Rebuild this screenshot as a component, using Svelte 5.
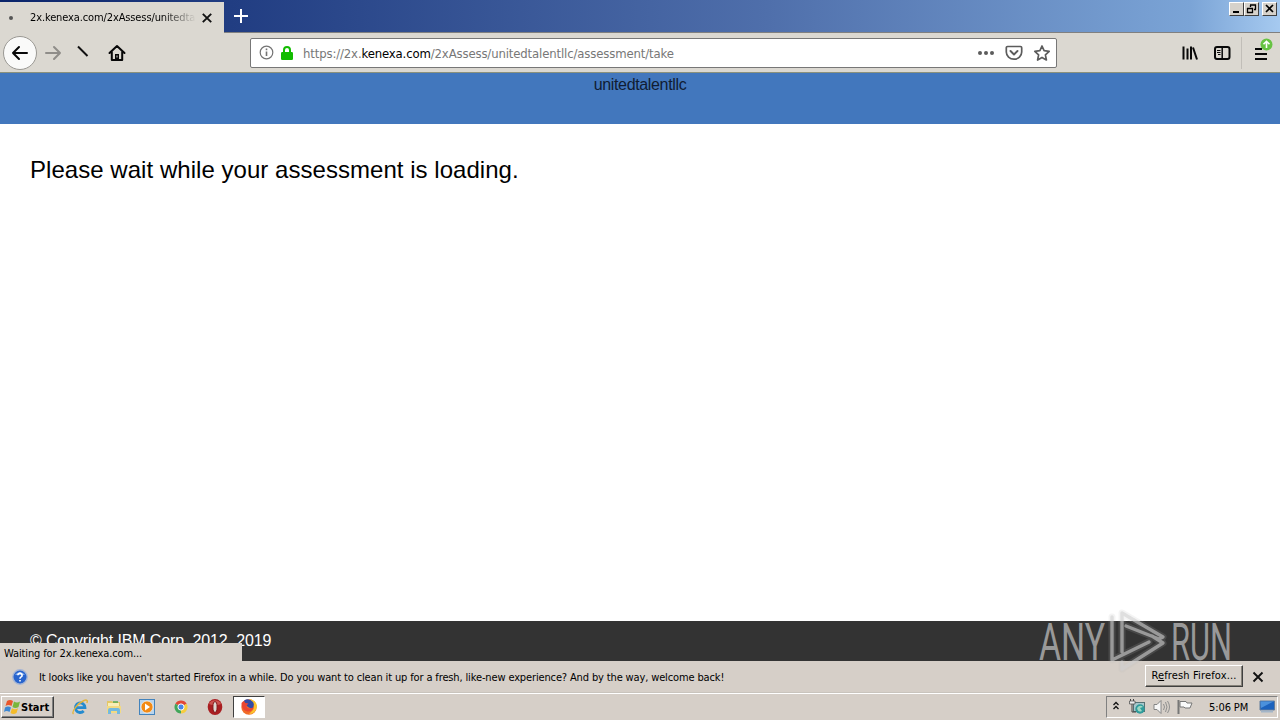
<script>
  const host = '2x.kenexa.com';
  const message =
    "It looks like you haven't started Firefox in a while. Do you want to clean it up for a fresh, like-new experience? And by the way, welcome back!";
</script>

<div class="screen">
  <div class="titlebar">
    <div class="tab">
      <span class="dot"></span>
      <span class="tabtitle">2x.kenexa.com/2xAssess/unitedta</span>
      <svg class="tabclose" width="12" height="12" viewBox="0 0 12 12"><path d="M1.8 1.8l8.4 8.4M10.2 1.8l-8.4 8.4" stroke="#111" stroke-width="1.9" /></svg>
    </div>
    <svg class="plus" width="16" height="16" viewBox="0 0 16 16"><path d="M8 1v14M1 8h14" stroke="#fff" stroke-width="2" /></svg>
    <div class="winbtns">
      <span class="wb"><svg width="14" height="12"><path d="M3 9h6" stroke="#000" stroke-width="2" /></svg></span>
      <span class="wb"><svg width="14" height="12"><path d="M5 2h6M10.500 1.500v5M5.500 2v2M9 6.500h2M2 5.500h6M2.500 5v5M7.500 5v5M2 9.500h6" stroke="#000" stroke-width="1.300" fill="none" /></svg></span>
      <span class="wb last"><svg width="14" height="12"><path d="M3 2l7 7M10 2l-7 7" stroke="#000" stroke-width="1.700" /></svg></span>
    </div>
  </div>

  <div class="toolbar">
    <div class="back"><svg width="18" height="16" viewBox="0 0 18 16"><path d="M8 2L2 8l6 6M2 8h14" fill="none" stroke="#080808" stroke-width="2" stroke-linecap="round" stroke-linejoin="round" /></svg></div>
    <svg class="fwd" width="18" height="16" viewBox="0 0 18 16"><path d="M10 2l6 6-6 6M16 8H2" fill="none" stroke="#8f8d89" stroke-width="2" stroke-linecap="round" stroke-linejoin="round" /></svg>
    <svg class="slash" width="14" height="14" viewBox="0 0 14 14"><path d="M2 1.500l9.500 9.500" stroke="#111" stroke-width="2" /></svg>
    <svg class="home" width="18" height="18" viewBox="0 0 18 18"><path d="M1.500 9L9 2l7.500 7M3.800 8v8h10.400V8" fill="none" stroke="#080808" stroke-width="2" stroke-linejoin="round" stroke-linecap="round" /><path d="M7 16v-6h4v6z" fill="#080808" /><path d="M9 11.500v2" stroke="#dbd8d1" stroke-width="1" /></svg>
    <div class="urlbar">
      <svg class="info" width="15" height="15" viewBox="0 0 15 15"><circle cx="7.500" cy="7.500" r="6.300" fill="none" stroke="#737373" stroke-width="1.200" /><path d="M7.500 6.500v4.500M7.500 3.500v1.700" stroke="#737373" stroke-width="1.600" /></svg>
      <svg class="lock" width="12" height="14" viewBox="0 0 12 14"><path d="M3 7V4a3 3 0 0 1 6 0v3" fill="none" stroke="#12bc00" stroke-width="2" /><rect y="6" width="12" height="8" rx="1.200" fill="#12bc00" /></svg>
      <span class="url">https://2x.<b>kenexa.com</b>/2xAssess/unitedtalentllc/assessment/take</span>
      <svg class="urlicons" width="76" height="18" viewBox="0 0 76 18">
        <g fill="#5c5c5c"><circle cx="4" cy="9" r="2" /><circle cx="10" cy="9" r="2" /><circle cx="16" cy="9" r="2" /></g>
        <g fill="none" stroke="#5c5c5c" stroke-width="1.900" stroke-linejoin="round" stroke-linecap="round"><path d="M31.500 2.500h13a1.200 1.200 0 0 1 1.200 1.200V8a7.700 7.200 0 0 1-15.400 0V3.700a1.200 1.200 0 0 1 1.200-1.200z" stroke-width="1.700" /><path d="M34.500 7l3.500 3.500L41.500 7" /><path d="M66 2l2.100 4.700 5.100.6-3.800 3.500 1 5.200L66 13.400 61.600 16l1-5.200-3.800-3.500 5.100-.6z" stroke-width="1.700" /></g>
      </svg>
    </div>
    <svg class="library" width="16" height="16" viewBox="0 0 16 16"><path d="M1.500 1.500v13M5.500 3.500v11M9 1.500v13M11 2.500l4 12" fill="none" stroke="#080808" stroke-width="2" /></svg>
    <svg class="sidebar" width="17" height="14" viewBox="0 0 17 14"><rect x="1" y="1" width="14.500" height="12" rx="2" fill="none" stroke="#080808" stroke-width="2" /><path d="M8.200 1v12" stroke="#080808" stroke-width="1.500" /><path d="M3 4.500h3.500M3 6.500h3.500M4 8.500h2.500" stroke="#080808" stroke-width="1" /></svg>
    <div class="menu"><svg width="26" height="28" viewBox="0 0 26 28"><path d="M7 12h7M7 17h12M7 22h12" stroke="#080808" stroke-width="2" /><circle cx="18.500" cy="7.500" r="6" fill="#67c343" /><path d="M18.500 11V4.500M15.500 7.300l3-3 3 3" fill="none" stroke="#fff" stroke-width="1.600" /></svg></div>
  </div>

  <header>unitedtalentllc</header>
  <main><p>Please wait while your assessment is loading.</p></main>
  <footer>
    <span class="copy">© Copyright IBM Corp. 2012, 2019</span>
    <div class="status"><span>Waiting for {host}...</span></div>
    <div class="mark">
      <svg width="200" height="68" viewBox="0 0 200 68">
        <g fill="#999" font-family="Roboto, sans-serif" font-size="51">
          <text x="1" y="51" textLength="66" lengthAdjust="spacingAndGlyphs">ANY</text>
          <text x="133" y="51" textLength="61" lengthAdjust="spacingAndGlyphs">RUN</text>
        </g>
        <g fill="none" stroke-linejoin="round" stroke-linecap="round">
          <path d="M84 43V4L125 28L121 30L88 17M74 8V51L111 33M84 60L125 34L114 27M84 60V53" stroke="#bbb" stroke-opacity=".16" stroke-width="7" />
          <path d="M84 43V4L125 28L121 30L88 17M74 8V51L111 33M84 60L125 34L114 27M84 60V53" stroke="#d0d0d0" stroke-opacity=".6" stroke-width="3.400" />
        </g>
      </svg>
    </div>
  </footer>

  <div class="notice">
    <svg class="help" width="16" height="16" viewBox="0 0 16 16"><circle cx="8" cy="8" r="7.200" fill="#2864cd" stroke="#a6b6d5" stroke-width="1.400" /><path d="M3 6a5.500 4.500 0 0 1 10 0z" fill="#7da9ee" /><path d="M5.900 6.200a2.100 2 0 1 1 3.200 1.700Q8 8.500 8 9.700M8 11v1.600" fill="none" stroke="#fff" stroke-width="1.600" /></svg>
    <span class="msg">{message}</span>
    <button><span>R<u>e</u>fresh Firefox...</span></button>
    <svg class="nclose" width="12" height="12" viewBox="0 0 12 12"><path d="M1.500 1.500l9 9M10.500 1.500l-9 9" stroke="#111" stroke-width="1.900" /></svg>
  </div>

  <div class="taskbar">
    <div class="start">
      <svg width="17" height="16" viewBox="0 0 17 16"><path d="M3 2q3-2 6 0L7.500 7q-3-2-6 0z" fill="#e9562b" /><path d="M10 2.500q3 2 6 0L14.500 8q-3 2-6 0z" fill="#79b63b" /><path d="M1 8.500q3-2 6 0L5.500 13q-3-2-5.500 0z" fill="#3c87d3" /><path d="M8 9.200q3 2 6 0L12.500 14q-3 2-6 0z" fill="#f5bc2a" /></svg>
      <span>Start</span>
    </div>
    <div class="apps">
      <svg width="18" height="18" viewBox="0 0 18 18"><path d="M4.800 9.700h9.200A4.800 4.800 0 1 0 12.700 13" fill="none" stroke="#258bcf" stroke-width="2.800" /><path d="M2.500 16C0 14 7 5 13 2.500c3-1.200 4 .2 2.800 2.500" fill="none" stroke="#e2b43b" stroke-width="1.400" /></svg>
      <svg width="18" height="18" viewBox="0 0 18 18"><path d="M2 3h5l1 1h7v11H2z" fill="#e4c767" /><path d="M3 5h11v6H3z" fill="#f9eeb6" /><path d="M2 8h14v7H2z" fill="#f3da82" /><path d="M3 16v-4q0-2 2-2h8q2 0 2 2v4h-3v-3H6v3z" fill="#74b9df" /><path d="M8 4h5" stroke="#57a950" stroke-width="1.500" /></svg>
      <svg width="18" height="18" viewBox="0 0 18 18"><rect x="1.500" y="1.500" width="15" height="15" fill="#b8d4ed" stroke="#4383bc" /><circle cx="9" cy="9" r="6" fill="#f28a16" stroke="#fff" stroke-width=".6" /><path d="M7 5.500l5 3.500-5 3.500z" fill="#fff" /></svg>
      <svg width="18" height="18" viewBox="0 0 18 18"><path d="M9 9L3.370 5.750A6.500 6.500 0 0 1 14.630 5.750z" fill="#e24736" /><path d="M9 9l5.630-3.250A6.500 6.500 0 0 1 9 15.500z" fill="#f6cd3e" /><path d="M9 9v6.500A6.500 6.500 0 0 1 3.370 5.750z" fill="#42a65a" /><circle cx="9" cy="9" r="3.100" fill="#4886e8" stroke="#fff" stroke-width="1" /></svg>
      <svg width="18" height="18" viewBox="0 0 18 18"><ellipse cx="9" cy="9" rx="7.300" ry="8" fill="#a91e21" /><path d="M3 6a6.500 6 0 0 1 12 0L9 8z" fill="#cc5350" /><ellipse cx="9" cy="9" rx="2.100" ry="5.400" fill="#ddd6d0" stroke="#811316" /></svg>
      <div class="active"><svg width="18" height="18" viewBox="0 0 18 18"><circle cx="9" cy="9" r="7.700" fill="#f16b28" /><path d="M9 1q7 1 8 7-1 8-8 8l4-4q3-5-4-11z" fill="#fbc42d" /><path d="M4 2.500Q9-.5 13 4q2 3-1 7L8 9 5 6z" fill="#324ba5" /><path d="M1.500 5l2-2 2 2 3 .5-2 2q0 3 3 3l4-1q-1 4-6 4-6-1-6-8.500z" fill="#e94532" /></svg></div>
    </div>
    <div class="tray">
      <svg class="chev" width="8" height="12" viewBox="0 0 8 12"><path d="M1.500 5L4 2.500 6.500 5M1.500 9L4 6.500 6.500 9" fill="none" stroke="#111" stroke-width="1.300" /></svg>
      <svg class="net" width="17" height="16" viewBox="0 0 17 16"><rect x="4.500" y="3.500" width="11" height="9" fill="#a6c8cc" stroke="#557174" /><path d="M1.500 0v4M4.500 0v4M3 5v8h4" fill="none" stroke="#444" /><path d="M.5 2h5.500v3H.5z" fill="#eee" stroke="#555" stroke-width=".8" /><circle cx="11" cy="10" r="4.700" fill="#2f9b9b" /><path d="M8 9q3-4 6-1l-3 1 2 3q-4 2-5-3z" fill="#a0d8c3" /></svg>
      <svg class="vol" width="17" height="16" viewBox="0 0 17 16"><path d="M1 5.500h3L8 1.500v13l-4-4H1z" fill="#f7f7f7" stroke="#858585" /><path d="M10.500 5q2 3 0 6M12.500 3q3 5 0 10M14.500 2q4 6 0 12" fill="none" stroke="#8f8f8f" /></svg>
      <svg class="flag" width="16" height="16" viewBox="0 0 16 16"><path d="M1.500 1v14" stroke="#777" stroke-width="2" /><path d="M3 2.500h6l1 1.500h5l-2 5H8L7 8H3z" fill="#fafafa" stroke="#777" /></svg>
      <span class="clock">5:06 PM</span>
      <svg class="desk" width="17" height="14" viewBox="0 0 17 14"><path d="M1 1h14.500v9H1z" fill="#1c62bd" stroke="#637d9c" /><path d="M1.500 1.500h13L2 8z" fill="#4b91dc" /><path d="M2 11.500h12" stroke="#a3b5c8" stroke-width="2" /></svg>
    </div>
  </div>
</div>

<style>
  :global(body) { margin: 0; overflow: hidden; }
  .screen { width: 1280px; height: 720px; display: flex; flex-direction: column; background: #fff; color: #000; font: 11px/14px "DejaVu Sans Condensed", "DejaVu Sans", sans-serif; }
  svg { display: block; flex: none; }
  span { white-space: nowrap; }
  .titlebar { height: 33px; display: flex; flex: none; border-bottom: 1px solid #808080; box-sizing: border-box; background: linear-gradient(90deg, #0a246a, #213d82 18%, #4f6fab 60%, #7ba4d6 93%, #a6caf0); }
  .tab { box-sizing: border-box; width: 224px; height: 31px; margin-top: 2px; background: #dbd8d1; display: flex; align-items: center; }
  .dot { width: 4px; height: 4px; border-radius: 50%; background: #555; margin-left: 9px; flex: none; }
  .tabtitle { width: 166px; margin-left: 17px; overflow: hidden; letter-spacing: -.12px; -webkit-mask-image: linear-gradient(90deg, #000 80%, transparent); mask-image: linear-gradient(90deg, #000 80%, transparent); }
  .tabclose { margin-left: 5px; }
  .plus { margin: 8px 0 0 9px; }
  .winbtns { display: flex; margin: 2px 3px 0 auto; height: 14px; }
  .wb { width: 15px; height: 14px; box-sizing: border-box; background: #d6d2cb; border: 1px solid; border-color: #fff #404040 #404040 #fff; overflow: hidden; }
  .last { margin-left: 3px; }
  .toolbar { height: 40px; flex: none; display: flex; align-items: center; background: #dbd8d1; border-bottom: 1px solid #8a917c; box-sizing: border-box; }
  .back { width: 32px; height: 32px; border: 1px solid #9a9893; border-radius: 50%; background: #fafaf9; display: flex; align-items: center; justify-content: center; margin-left: 3px; }
  .fwd { margin-left: 7px; }
  .slash { margin: -2px 0 0 14px; }
  .home { margin-left: 18px; }
  .urlbar { width: 807px; height: 30px; box-sizing: border-box; margin-left: 124px; border: 1px solid #777; border-radius: 2px; background: #fff; display: flex; align-items: center; }
  .info { margin-left: 8px; }
  .lock { margin-left: 7px; }
  .url { margin-left: 10px; padding-top: 2px; font: 13px/18px "DejaVu Sans Condensed", sans-serif; color: #777; letter-spacing: -.14px; }
  .url b { font-weight: 400; color: #000; }
  .urlicons { margin: 0 4px 0 auto; }
  .library { margin-left: 125px; }
  .sidebar { margin-left: 16px; }
  .menu { border-left: 1px solid #c1beb8; height: 32px; margin-left: 10px; padding-left: 6px; }
  header { height: 51px; flex: none; background: #4277bd; color: #101c33; text-align: center; font: 16px/24px "Liberation Sans", sans-serif; letter-spacing: -.35px; }
  main { flex: 1; background: #fff; }
  main p { margin: 31px 0 0 30px; font: 24px/30px "Liberation Sans", sans-serif; letter-spacing: .04px; }
  footer { height: 40px; flex: none; position: relative; background: #333; color: #fff; font: 16px/40px "Liberation Sans", sans-serif; padding-left: 30px; }
  .copy { letter-spacing: -.14px; }
  .status { position: absolute; left: 0; bottom: 0; width: 238px; height: 18px; padding: 0 0 0 4px; background: #d5cfc8; color: #000; font: 11px/21px "DejaVu Sans Condensed", sans-serif; letter-spacing: -.12px; }
  .mark { position: absolute; left: 1038px; top: -12px; z-index: 2; }
  .notice { height: 32px; flex: none; background: #d6cfc8; display: flex; align-items: center; border-bottom: 1px solid #c9c4bd; box-sizing: border-box; }
  .help { margin-left: 12px; }
  .msg { margin-left: 11px; padding-top: 2px; letter-spacing: -.137px; }
  button { box-sizing: border-box; width: 98px; height: 22px; margin: -2px 0 0 auto; padding: 1px 0 0; background: #d6d0c9; border: 1px solid; border-color: #fff #404040 #404040 #fff; box-shadow: inset -1px -1px #858179; font: inherit; letter-spacing: .15px; color: #000; }
  .nclose { margin: 0 16px 0 9px; }
  .taskbar { height: 27px; flex: none; box-sizing: border-box; display: flex; background: #d6cfc8; border-top: 1px solid #fff; align-items: center; }
  .start { width: 53px; height: 22px; box-sizing: border-box; margin-left: 1px; border: 1px solid; border-color: #fff #404040 #404040 #fff; box-shadow: inset -1px -1px #808080; display: flex; align-items: center; padding-left: 2px; font-weight: 700; letter-spacing: 0; }
  .start span { padding-top: 1px; }
  .apps { display: flex; align-items: center; margin-left: 17px; gap: 15.7px; }
  .active { width: 30px; height: 20px; border: 1px solid; border-color: #404040 #fff #fff #404040; background: #fff; display: flex; align-items: center; justify-content: center; margin-left: -6px; }
  .tray { margin: 0 2px 0 auto; width: 172px; height: 22px; box-sizing: border-box; border: 1px solid; border-color: #808080 #fff #fff #808080; display: flex; align-items: center; }
  .chev { margin: -2px 0 0 5px; }
  .net { margin-left: 9px; }
  .vol { margin-left: 7px; }
  .flag { margin-left: 7px; }
  .clock { margin-left: 16px; padding-top: 1px; letter-spacing: -.1px; }
  .desk { margin: 0 1px 0 auto; }
</style>
